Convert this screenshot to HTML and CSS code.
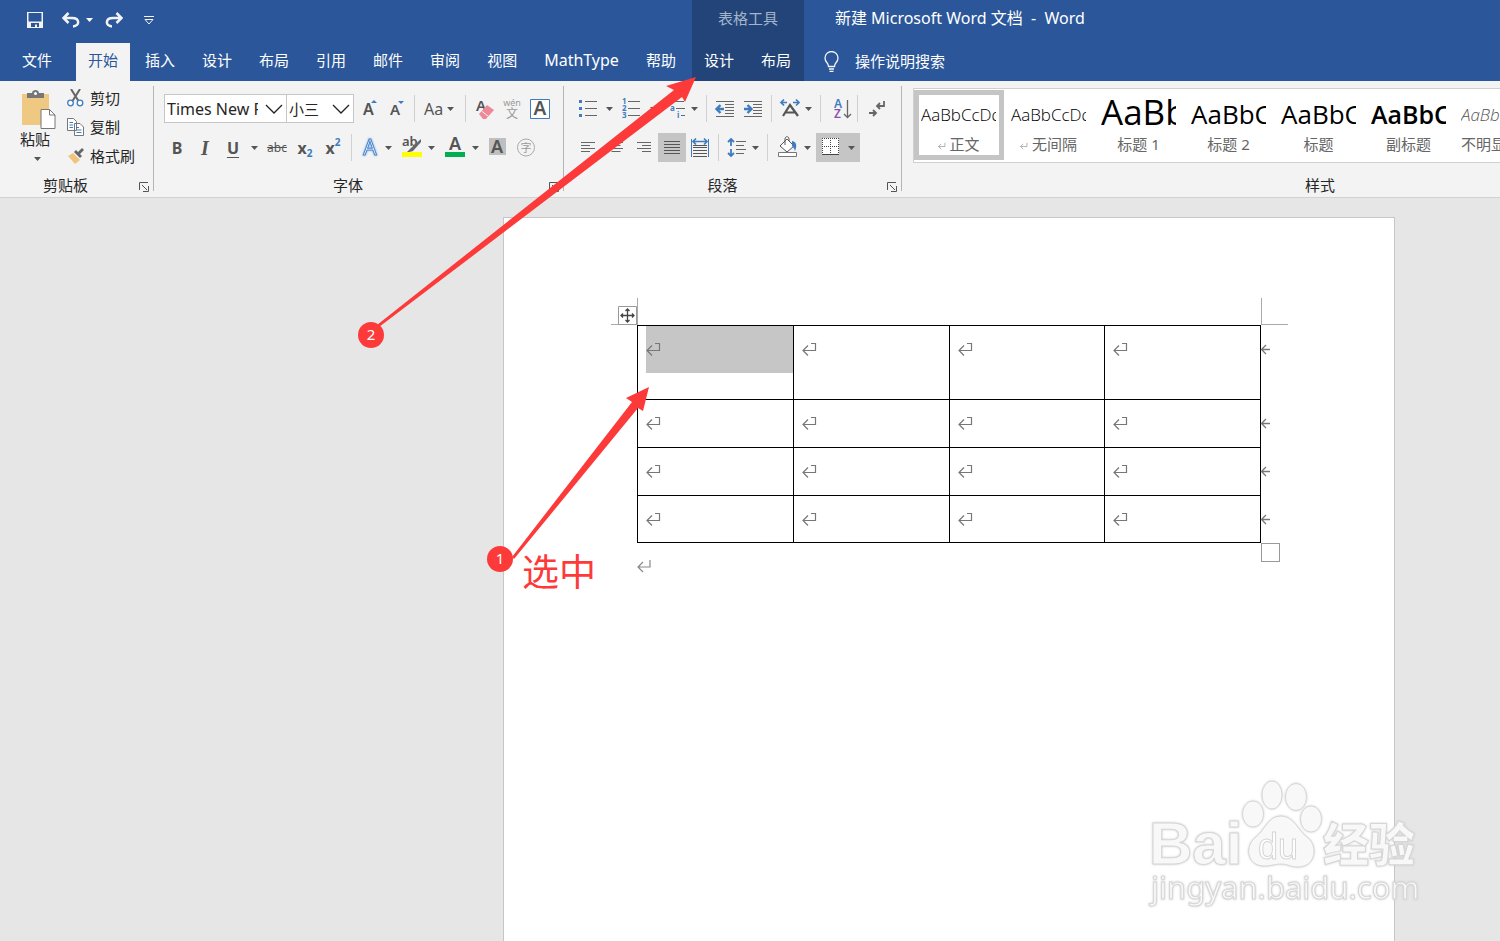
FILE: index.html
```html
<!DOCTYPE html>
<html lang="zh-CN">

<head>
    <meta charset="UTF-8">
    <meta name="viewport" content="width=device-width, initial-scale=1.0">
    <title>新建 Microsoft Word 文档 - Word</title>
    <link rel="stylesheet" href="styles.css">
</head>

<body>
    <!-- shared glyphs -->
    <svg class="sprite">
        <symbol id="caret" viewBox="0 0 7 4"><path d="M0 0h7L3.5 4z" fill="currentColor"/></symbol>
        <symbol id="chevron" viewBox="0 0 18 10"><path d="M1 1l8 8 8-8" fill="none" stroke="#222" stroke-width="1.3"/></symbol>
        <symbol id="launcher" viewBox="0 0 10 10"><path d="M.5 8V.5H9M3 3l5 5M9.500 4v5.500H4" fill="none" stroke="#555"/></symbol>
        <symbol id="cell-mark" viewBox="0 0 15 14"><path d="M9 1.500h4.500v7H1M6 3.500l-5 5 5 5" fill="none" stroke="#777" stroke-width="1.200"/></symbol>
        <symbol id="para-mark" viewBox="0 0 15 14"><path d="M13 1v7H1M6 3L1 8l5 5" fill="none" stroke="#888" stroke-width="1.200"/></symbol>
        <symbol id="row-mark" viewBox="0 0 10 11"><path d="M10 5.500H2M6 1L1.500 5.500 6 10" fill="none" stroke="#777" stroke-width="1.300"/></symbol>
    </svg>

    <header class="header">
        <div class="header-main">
            <div class="quick">
                <button class="quick-btn" aria-label="保存"><svg width="16" height="16" viewBox="0 0 16 16"><path d="M0 0h16v16H0z" fill="#f3f3f3"/><path d="M1.500 1h13v8.500h-13zM4 11h8v4h-2v-2.500H8V15H4z" fill="#2b579a"/></svg></button>
                <button class="quick-btn undo" aria-label="撤消"><svg width="18" height="16" viewBox="0 0 18 16"><path d="M2 6h8c8 0 8 8 1 8.500M6.500 1L1.500 6l5 5" fill="none" stroke="#f3f3f3" stroke-width="2.500"/></svg><svg class="caret" width="6" height="4"><use href="#caret"/></svg></button>
                <button class="quick-btn redo" aria-label="重复"><svg width="18" height="16" viewBox="0 0 18 16"><path d="M16 6H8C0 6 0 14 7 14.500M11.500 1l5 5-5 5" fill="none" stroke="#f3f3f3" stroke-width="2.500"/></svg></button>
                <button class="quick-btn" aria-label="自定义快速访问工具栏"><svg width="10" height="9" viewBox="0 0 10 9"><path d="M0 .5h10M1 3.500h8L5 8z" fill="none" stroke="#f3f3f3"/></svg></button>
            </div>
            <nav class="tabs">
                <button class="tab file">文件</button>
                <button class="tab active">开始</button>
                <button class="tab">插入</button>
                <button class="tab">设计</button>
                <button class="tab">布局</button>
                <button class="tab">引用</button>
                <button class="tab">邮件</button>
                <button class="tab">审阅</button>
                <button class="tab">视图</button>
                <button class="tab latin">MathType</button>
                <button class="tab">帮助</button>
            </nav>
        </div>
        <div class="header-context">
            <div class="context-title">表格工具</div>
            <nav class="tabs">
                <button class="tab">设计</button>
                <button class="tab">布局</button>
            </nav>
        </div>
        <div class="header-side">
            <div class="doc-title">新建 Microsoft Word 文档&nbsp; -&nbsp; Word</div>
            <label class="search">
                <svg width="15" height="21" viewBox="0 0 15 21"><path d="M4.500 15.500c0-4-3.500-4-3.500-8.500a6.500 6.500 0 0 1 13 0c0 4.500-3.500 4.500-3.500 8.500zM5 18h5M5.500 20.300h4" fill="none" stroke="#f3f3f3" stroke-width="1.300"/></svg>
                <input type="text" placeholder="操作说明搜索">
            </label>
        </div>
    </header>

    <section class="ribbon">
        <div class="group clipboard">
            <div class="clip-tools">
                <button class="paste">
                    <svg width="36" height="40" viewBox="0 0 36 40"><path d="M2 4h27v31H2z" fill="#efc982"/><path d="M7 8V3h5c0-4 7-4 7 0h5v5z" fill="#777"/><circle cx="15.500" cy="3.500" r="1.500" fill="#fff"/><path d="M21 19.500h8.500l5.500 5.500v13.500H21z" fill="#fff" stroke="#777"/><path d="M29.500 19.500V25H35" fill="none" stroke="#777"/></svg>
                    <span>粘贴</span>
                    <svg class="caret" width="7" height="4"><use href="#caret"/></svg>
                </button>
                <div class="clip-list">
                    <button><svg width="17" height="18" viewBox="0 0 17 18"><path d="M4 0l7.500 12M13 0L5.500 12" stroke="#666" stroke-width="2"/><circle cx="3.500" cy="14" r="2.800" fill="#fff" stroke="#3f7cbf" stroke-width="1.300"/><circle cx="13" cy="14" r="2.800" fill="#fff" stroke="#3f7cbf" stroke-width="1.300"/></svg>剪切</button>
                    <button><svg width="17" height="18" viewBox="0 0 17 18"><g fill="#fff" stroke="#777"><path d="M.5.500h6l3 3v9h-9zM7.500 5.500h5.500l3.500 3.500v8.500h-9z"/></g><path d="M2.500 4.500H6M2.500 7H6M2.500 9.500H6M9.500 9.500H12M9.500 12h5M9.500 14.500h5" stroke="#3f7cbf"/></svg>复制</button>
                    <button><svg width="17" height="18" viewBox="0 0 17 18"><path d="M1 9l5-3 7 7-5 4z" fill="#efc57e"/><path d="M7 5l2-2 6 6-2 2zM11 5l4-4 2 2-4 4z" fill="#666"/></svg>格式刷</button>
                </div>
            </div>
            <div class="group-name">剪贴板<svg class="launcher"><use href="#launcher"/></svg></div>
        </div>

        <div class="group font">
            <div class="row">
                <span class="combo name"><select aria-label="字体"><option>Times New Roman</option></select><svg width="18" height="10"><use href="#chevron"/></svg></span>
                <span class="combo size"><select aria-label="字号"><option>小三</option></select><svg width="18" height="10"><use href="#chevron"/></svg></span>
                <button class="tool" aria-label="增大字号"><svg width="28" height="28"><text x="9" y="20" class="letter" font-size="16">A</text><path d="M17 8l3-3 3 3z" fill="#3f7cbf"/></svg></button>
                <button class="tool" aria-label="减小字号"><svg width="28" height="28"><text x="8" y="20" class="letter" font-size="15">A</text><path d="M16 6h6l-3 3z" fill="#3f7cbf"/></svg></button>
                <i class="sep"></i>
                <button class="tool split wide">Aa<svg class="caret" width="7" height="4"><use href="#caret"/></svg></button>
                <i class="sep"></i>
                <button class="tool" aria-label="清除格式"><svg width="28" height="28"><text x="6" y="16" class="letter" font-size="15">A</text><path d="M9 19l8-9 7 5-8 9h-3z" fill="#ee8a98"/><path d="M11.500 16l7 5.500" stroke="#f3f3f3"/></svg></button>
                <button class="tool" aria-label="拼音指南"><svg width="28" height="28"><text x="14" y="11" class="faint" font-size="9">wén</text><text x="14" y="23" class="faint" font-size="12">文</text></svg></button>
                <button class="tool" aria-label="字符边框"><svg width="28" height="28"><path d="M4.500 4.500h19v19h-19z" fill="#fff" stroke="#3f7cbf"/><text x="14" y="20" class="letter mid" font-size="19">A</text></svg></button>
            </div>
            <div class="row">
                <button class="tool"><b>B</b></button>
                <button class="tool serif">I</button>
                <button class="tool split"><b class="under">U</b><svg class="caret" width="7" height="4"><use href="#caret"/></svg></button>
                <button class="tool strike">abc</button>
                <button class="tool script">x<sub>2</sub></button>
                <button class="tool script">x<sup>2</sup></button>
                <i class="sep"></i>
                <button class="tool split tight" aria-label="文本效果"><svg width="26" height="28"><text x="14" y="21" text-anchor="middle" class="glow" font-size="21">A</text></svg><svg class="caret" width="7" height="4"><use href="#caret"/></svg></button>
                <button class="tool split" aria-label="突出显示"><svg width="28" height="28"><text x="6" y="12" class="letter" font-size="13">ab</text><path d="M25 5L15 14l-5 5 7-2 8-9z" fill="#666"/><path d="M6 18h20v5H6z" fill="#ff0"/></svg><svg class="caret" width="7" height="4"><use href="#caret"/></svg></button>
                <button class="tool split" aria-label="字体颜色"><svg width="28" height="28"><text x="15" y="16" class="letter mid" font-size="18">A</text><path d="M5 18h20v5H5z" fill="#00b050"/></svg><svg class="caret" width="7" height="4"><use href="#caret"/></svg></button>
                <button class="tool" aria-label="字符底纹"><svg width="28" height="28"><path d="M5 4h17v17H5z" fill="#bfbfbf"/><text x="13" y="19" class="letter mid" font-size="18">A</text></svg></button>
                <button class="tool" aria-label="带圈字符"><svg width="28" height="28"><circle cx="14" cy="13.500" r="8.500" fill="none" stroke="#aaa"/><text x="14" y="18" class="faint" font-size="11">字</text></svg></button>
            </div>
            <div class="group-name">字体<svg class="launcher"><use href="#launcher"/></svg></div>
        </div>

        <div class="group para">
            <div class="row">
                <button class="tool split" aria-label="项目符号"><svg width="28" height="28"><path d="M11 6.500h12M11 13.500h12M11 20.500h12" stroke="#666"/><path d="M5 5h3v3H5zM5 12h3v3H5zM5 19h3v3H5z" fill="#3f7cbf"/></svg><svg class="caret" width="7" height="4"><use href="#caret"/></svg></button>
                <button class="tool split" aria-label="编号"><svg width="28" height="28"><path d="M10 6.500h12M10 13.500h12M10 20.500h12" stroke="#666"/><g class="num"><text x="4" y="9">1</text><text x="4" y="16">2</text><text x="4" y="23">3</text></g></svg><svg class="caret" width="7" height="4"><use href="#caret"/></svg></button>
                <button class="tool split tight" aria-label="多级列表"><svg width="26" height="28"><path d="M10 6.500h12M14 13.500h9M19 20.500h4" stroke="#666"/><g class="num"><text x="4" y="9">1</text><text x="8" y="16">a</text><text x="15" y="23">i</text></g></svg><svg class="caret" width="7" height="4"><use href="#caret"/></svg></button>
                <i class="sep"></i>
                <button class="tool" aria-label="减少缩进"><svg width="28" height="28"><path d="M5 6.500h18M14 9.500h9M14 12.500h9M14 15.500h9M14 18.500h9M5 21.500h18" stroke="#666"/><path d="M13 14H6M9.500 10L5.500 14l4 4" fill="none" stroke="#3f7cbf" stroke-width="2.400"/></svg></button>
                <button class="tool" aria-label="增加缩进"><svg width="28" height="28"><path d="M5 6.500h18M14 9.500h9M14 12.500h9M14 15.500h9M14 18.500h9M5 21.500h18" stroke="#666"/><path d="M5 14h7M8.500 10l4 4-4 4" fill="none" stroke="#3f7cbf" stroke-width="2.400"/></svg></button>
                <i class="sep"></i>
                <button class="tool split tight" aria-label="中文版式"><svg width="26" height="28"><path d="M7 21L14 10l8 11M10 17.500h9" fill="none" stroke="#555" stroke-width="2.200"/><path d="M5 7.500h6M8 4.500l-3 3 3 3M23 7.500h-6M20 4.500l3 3-3 3" fill="none" stroke="#3f7cbf" stroke-width="1.700"/></svg><svg class="caret" width="7" height="4"><use href="#caret"/></svg></button>
                <i class="sep"></i>
                <button class="tool" aria-label="排序"><svg width="28" height="28"><text x="9" y="13" font-size="12" font-weight="600" fill="#3f7cbf">A</text><text x="9" y="23" font-size="12" font-weight="600" fill="#8a4fb0">Z</text><path d="M22.500 5v17M19 19l3.500 3.500L26 19" fill="none" stroke="#666" stroke-width="1.300"/></svg></button>
                <i class="sep"></i>
                <button class="tool" aria-label="显示编辑标记"><svg width="28" height="28"><path d="M22 6v5h-7M18 8l-3 3 3 3M7 18h7M11 15l3 3-3 3" fill="none" stroke="#666" stroke-width="1.800"/></svg></button>
            </div>
            <div class="row">
                <button class="tool" aria-label="左对齐"><svg width="28" height="28"><path d="M7 8.500h14M7 11.500h9M7 14.500h14M7 17.500h9" stroke="#666"/></svg></button>
                <button class="tool" aria-label="居中"><svg width="28" height="28"><path d="M7 8.500h14M9.500 11.500h9M7 14.500h14M9.500 17.500h9" stroke="#666"/></svg></button>
                <button class="tool" aria-label="右对齐"><svg width="28" height="28"><path d="M7 8.500h14M12 11.500h9M7 14.500h14M12 17.500h9" stroke="#666"/></svg></button>
                <button class="tool on" aria-label="两端对齐"><svg width="28" height="28"><path d="M6 7.500h16M6 10.500h16M6 13.500h16M6 16.500h16M6 19.500h16" stroke="#555"/></svg></button>
                <button class="tool" aria-label="分散对齐"><svg width="28" height="28"><path d="M7 11.500h14M7 13.500h14M7 16.500h14M7 19.500h14M7 22.500h14" stroke="#555"/><path d="M5.500 5v18M22.500 5v18" stroke="#3f7cbf"/><path d="M7 7.500h14M10 4.500l-3 3 3 3M18 4.500l3 3-3 3" fill="none" stroke="#3f7cbf" stroke-width="1.700"/></svg></button>
                <i class="sep"></i>
                <button class="tool split tight" aria-label="行距"><svg width="26" height="28"><path d="M13 7.500h10M13 11.500h8M13 15.500h10M13 19.500h8" stroke="#666"/><path d="M8 5v7M5 8l3-3 3 3M8 15v7M5 19l3 3 3-3" fill="none" stroke="#3f7cbf" stroke-width="1.800"/></svg><svg class="caret" width="7" height="4"><use href="#caret"/></svg></button>
                <i class="sep"></i>
                <button class="tool split" aria-label="底纹"><svg width="28" height="28"><path d="M15 5l7 7-7 6-7-6zM13 11V5c0-3 4-3 4 0v2" fill="#fff" stroke="#555"/><path d="M20 7c5 1 5 5 3 10-1-3-2-4-3-5z" fill="#3f7cbf"/><path d="M6.500 18.500h18v4h-18z" fill="#fff" stroke="#777"/></svg><svg class="caret" width="7" height="4"><use href="#caret"/></svg></button>
                <button class="tool split on" aria-label="边框"><svg width="28" height="28"><path d="M6 4h17v17H6z" fill="#fff"/><path d="M6.500 4v16M14.500 4v16M22.500 4v16M6 4.500h17M6 12.500h17" stroke="#444" stroke-dasharray="1 1"/><path d="M6 20.500h17" stroke="#444"/></svg><svg class="caret" width="7" height="4"><use href="#caret"/></svg></button>
            </div>
            <div class="group-name">段落<svg class="launcher"><use href="#launcher"/></svg></div>
        </div>

        <div class="group styles">
            <div class="gallery">
                <button class="style selected"><span class="sample">AaBbCcDd</span><span><svg width="8" height="8"><use href="#para-mark"/></svg> 正文</span></button>
                <button class="style"><span class="sample">AaBbCcDd</span><span><svg width="8" height="8"><use href="#para-mark"/></svg> 无间隔</span></button>
                <button class="style"><span class="sample h1">AaBb</span><span>标题 1</span></button>
                <button class="style"><span class="sample h2">AaBbC</span><span>标题 2</span></button>
                <button class="style"><span class="sample h2">AaBbC</span><span>标题</span></button>
                <button class="style"><span class="sample sub">AaBbC</span><span>副标题</span></button>
                <button class="style"><span class="sample subtle">AaBbCcDd</span><span>不明显强调</span></button>
            </div>
            <div class="group-name">样式</div>
        </div>
    </section>

    <main class="workspace">
        <article class="page">
            <div class="table-wrap">
                <svg class="crop left" width="27" height="27"><path d="M26.500 0v27M0 26.500h27" stroke="#aaa"/></svg>
                <svg class="crop right" width="27" height="27"><path d="M.5 0v27M0 26.500h27" stroke="#aaa"/></svg>
                <svg class="handle" width="19" height="19"><path d="M.5.500h18v18H.5z" fill="#fff" stroke="#999"/><path d="M9.500 3v13M3 9.500h13M7.500 5l2-2 2 2M7.500 14l2 2 2-2M5 7.500l-2 2 2 2M14 7.500l2 2-2 2" fill="none" stroke="#444" stroke-width="1.300"/></svg>
                <table class="grid">
                    <tr class="tall">
                        <td><div class="cell picked"><svg><use href="#cell-mark"/></svg></div></td>
                        <td><div class="cell"><svg><use href="#cell-mark"/></svg></div></td>
                        <td><div class="cell"><svg><use href="#cell-mark"/></svg></div></td>
                        <td><div class="cell"><svg><use href="#cell-mark"/></svg></div><svg class="row-end"><use href="#row-mark"/></svg></td>
                    </tr>
                    <tr>
                        <td><div class="cell"><svg><use href="#cell-mark"/></svg></div></td>
                        <td><div class="cell"><svg><use href="#cell-mark"/></svg></div></td>
                        <td><div class="cell"><svg><use href="#cell-mark"/></svg></div></td>
                        <td><div class="cell"><svg><use href="#cell-mark"/></svg></div><svg class="row-end"><use href="#row-mark"/></svg></td>
                    </tr>
                    <tr>
                        <td><div class="cell"><svg><use href="#cell-mark"/></svg></div></td>
                        <td><div class="cell"><svg><use href="#cell-mark"/></svg></div></td>
                        <td><div class="cell"><svg><use href="#cell-mark"/></svg></div></td>
                        <td><div class="cell"><svg><use href="#cell-mark"/></svg></div><svg class="row-end"><use href="#row-mark"/></svg></td>
                    </tr>
                    <tr>
                        <td><div class="cell"><svg><use href="#cell-mark"/></svg></div></td>
                        <td><div class="cell"><svg><use href="#cell-mark"/></svg></div></td>
                        <td><div class="cell"><svg><use href="#cell-mark"/></svg></div></td>
                        <td><div class="cell"><svg><use href="#cell-mark"/></svg></div><svg class="row-end"><use href="#row-mark"/></svg></td>
                    </tr>
                </table>
                <i class="resize"></i>
            </div>
            <svg class="last-mark" width="15" height="14"><use href="#para-mark"/></svg>
        </article>
    </main>

    <!-- step annotations -->
    <svg class="arrows" width="720" height="600">
        <path d="M377 325L674 90l-8-4 30-9-11 25-3-5L379 327z" fill="#fd3a3a"/>
        <path d="M512 557L632 402l-6-4 23-11-6 24-5-3L514 559z" fill="#fd3a3a"/>
    </svg>
    <span class="step two">2</span>
    <span class="step one">1</span>
    <span class="note">选中</span>

    <svg class="watermark" width="290" height="140" viewBox="0 0 290 140">
        <g class="mark">
            <ellipse cx="123" cy="44" rx="10.500" ry="13"/>
            <ellipse cx="142" cy="25" rx="10" ry="14"/>
            <ellipse cx="166" cy="27" rx="10.500" ry="13.500"/>
            <ellipse cx="181" cy="49" rx="10.500" ry="13"/>
            <path d="M151 46c-13 0-16 14-25 21-12 9-9 29 8 29 8 0 10-2 17-2s9 3 17 3c18 0 20-21 10-29-10-7-14-22-27-22z"/>
            <text x="19" y="94" font-size="60" class="bai">Bai</text>
            <text x="128" y="89" font-size="36">du</text>
            <text x="193" y="91" font-size="46" class="cn">经验</text>
            <text x="21" y="129" font-size="31" class="url">jingyan.baidu.com</text>
        </g>
    </svg>
</body>

</html>
```

FILE: styles.css
```css
* {
    box-sizing: border-box;
}

body {
    margin: 0;
    min-height: 100vh;
    display: flex;
    flex-direction: column;
    position: relative;
    overflow: hidden;
    background-color: #e6e6e6;
    font-family: "Noto Sans", "Noto Sans CJK SC", sans-serif;
    font-size: 15px;
    color: #262626;
}

button,
input,
select {
    font: inherit;
    color: inherit;
    background: none;
    border: none;
    padding: 0;
    margin: 0;
}

svg {
    flex: none;
}

.sprite {
    position: absolute;
    width: 0;
    height: 0;
}

.caret {
    width: 7px;
    height: 4px;
}

/* title bar and tabs */
.header {
    display: flex;
    height: 81px;
    background-color: #2b579a;
    color: white;
    white-space: nowrap;
}

.header-main {
    padding-right: 4px;
}

.quick {
    display: flex;
    align-items: center;
    height: 43px;
    padding: 0 0 3px 27px;
}

.quick-btn {
    display: flex;
    align-items: center;
}

.undo {
    gap: 6px;
    margin: 0 12px 0 19px;
}

.redo {
    margin-right: 21px;
}

.tabs {
    display: flex;
    gap: 3px;
}

.tab {
    height: 38px;
    padding: 0 12px 5px;
}

.tab.file {
    padding: 0 21px 5px 22px;
}

.tab.latin {
    font-size: 16px;
}

.tab.active {
    background-color: #f3f3f3;
    color: #2b579a;
}

.header-context {
    min-width: 112px;
    background-color: #224478;
}

.context-title {
    height: 43px;
    line-height: 36px;
    text-align: center;
    color: #a4b4cb;
}

.header-side {
    flex: 1;
    padding-left: 20px;
}

.doc-title {
    height: 43px;
    line-height: 36px;
    padding-left: 11px;
    font-size: 16px;
}

.search {
    display: flex;
    align-items: center;
    gap: 16px;
    height: 36px;
}

.search input {
    width: 200px;
    outline: none;
}

.search input::placeholder {
    color: white;
    opacity: 1;
}

/* ribbon */
.ribbon {
    display: flex;
    height: 117px;
    padding: 5px 0 6px;
    overflow: hidden;
    background-color: #f3f3f3;
    border-bottom: 1px solid #d2d2d2;
    white-space: nowrap;
}

.group {
    flex: none;
    display: flex;
    flex-direction: column;
    position: relative;
    border-right: 1px solid #b5b5b5;
}

.group-name {
    margin-top: auto;
    line-height: 12px;
    text-align: center;
}

.launcher {
    position: absolute;
    right: 4px;
    bottom: -1px;
    width: 10px;
    height: 10px;
}

.clipboard {
    width: 154px;
}

.clipboard .group-name {
    padding-right: 22px;
}

.clip-tools {
    display: flex;
    padding-left: 20px;
}

.paste {
    display: flex;
    flex-direction: column;
    align-items: flex-start;
    align-self: flex-start;
    line-height: 18px;
    margin-top: 4px;
    width: 36px;
}

.paste .caret {
    margin: 9px 0 0 14px;
    color: #555;
}

.clip-list {
    margin-left: 11px;
}

.clip-list button {
    display: flex;
    align-items: center;
    gap: 6px;
    height: 29px;
    padding-bottom: 6px;
}

.font {
    width: 410px;
    padding-left: 9px;
}

.font .group-name {
    padding-right: 30px;
}

.para {
    width: 338px;
    padding-left: 10px;
}

.para .group-name {
    padding-right: 30px;
}

.row {
    display: flex;
    align-items: center;
    height: 29px;
    margin-top: 10px;
}

.row:first-child {
    margin-top: 8px;
}

.combo {
    position: relative;
    height: 29px;
    background-color: white;
    border: 1px solid #c6c6c6;
}

.combo select {
    appearance: none;
    width: 100%;
    height: 27px;
    padding: 0 28px 0 2px;
    outline: none;
}

.combo svg {
    position: absolute;
    right: 3px;
    top: 9px;
}

.combo.name {
    width: 123px;
    margin-left: 1px;
    font-size: 16px;
}

.combo.size {
    width: 68px;
    margin-left: -1px;
}

.tool {
    flex: none;
    display: flex;
    align-items: center;
    justify-content: center;
    width: 28px;
    height: 29px;
    font-size: 16px;
    line-height: 24px;
    color: #555;
}

.tool.on {
    background-color: #c5c5c5;
}

.split {
    width: 44px;
    justify-content: flex-start;
}

.split .caret {
    margin-left: 4px;
}

.tight {
    width: 40px;
}

.tight .caret {
    margin-left: 3px;
}

.wide {
    width: 42px;
    padding-left: 5px;
}

.under {
    width: 28px;
    text-align: center;
    text-decoration: underline;
    text-underline-offset: 3px;
}

.serif {
    font-family: "Liberation Serif", serif;
    font-size: 20px;
    font-style: italic;
    font-weight: 700;
}

.strike {
    font-size: 12px;
    text-decoration: line-through;
}

.script {
    font-weight: 700;
}

.script sub,
.script sup {
    align-self: flex-end;
    padding: 3px 0;
    font-size: 10px;
    line-height: 12px;
    color: #3f7cbf;
}

.script sup {
    align-self: flex-start;
}

.letter {
    fill: #555;
    font-weight: 600;
}

.mid,
.faint {
    text-anchor: middle;
}

.faint {
    fill: #999;
}

.glow {
    fill: white;
    stroke: #4a86cc;
    stroke-width: 1px;
    filter: drop-shadow(0 0 1px #7fb0e6);
}

.num {
    fill: #3f7cbf;
    font-size: 8px;
    font-weight: 700;
}

.sep {
    width: 1px;
    height: 27px;
    margin: 0 4px;
    background-color: #d0d0d0;
}

/* style gallery */
.styles {
    min-width: 834px;
    padding-left: 11px;
}

.styles .group-name {
    padding-right: 8px;
}

.gallery {
    display: flex;
    height: 75px;
    margin-top: 2px;
    padding: 1px 0;
    background-color: white;
    border: 1px solid #d0d0d0;
}

.style {
    display: flex;
    flex-direction: column;
    align-items: center;
    width: 90px;
    height: 70px;
    padding-right: 1px;
    border: 5px solid transparent;
    overflow: hidden;
    line-height: 20px;
    color: #666;
}

.style.selected {
    border-color: #c5c5c5;
}

.sample {
    width: 75px;
    height: 39px;
    line-height: 39px;
    overflow: hidden;
    text-align: left;
    font-family: "Open Sans", "Noto Sans", sans-serif;
    font-size: 17px;
    font-weight: 300;
    color: black;
}

.sample.h1 {
    font-size: 35px;
    font-weight: 500;
    line-height: 34px;
}

.sample.h2 {
    font-size: 26px;
    font-weight: 400;
}

.sample.sub {
    font-size: 25px;
    font-weight: 600;
}

.sample.subtle {
    font-style: italic;
    color: #555;
}

/* document */
.workspace {
    flex: 1;
    display: flex;
    padding: 19px 7% 0 0;
}

.page {
    width: 892px;
    margin-left: auto;
    padding: 107px 133px 0;
    background-color: white;
    border: 1px solid #c6c6c6;
    border-bottom: none;
}

.table-wrap {
    position: relative;
}

.grid {
    width: 100%;
    table-layout: fixed;
    border-collapse: collapse;
}

.grid td {
    position: relative;
    height: 48px;
    padding: 0 0 0 8px;
    border: 1px solid black;
    vertical-align: top;
}

.grid .tall td {
    height: 74px;
}

.grid tr:last-child td {
    height: 47px;
}

.cell {
    height: 46px;
    padding-top: 16px;
}

.cell svg {
    display: block;
    width: 15px;
    height: 14px;
}

.picked {
    height: 47px;
    background-color: #c6c6c6;
}

.row-end {
    position: absolute;
    left: 100%;
    top: 18px;
    width: 10px;
    height: 11px;
}

.crop {
    position: absolute;
    top: -27px;
}

.crop.left {
    left: -26px;
}

.crop.right {
    left: 100%;
}

.handle {
    position: absolute;
    left: -19px;
    top: -19px;
}

.resize {
    position: absolute;
    left: 100%;
    top: 100%;
    width: 19px;
    height: 19px;
    border: 1px solid #999;
}

.last-mark {
    display: block;
    margin-top: 16px;
}

/* annotations */
.arrows {
    position: absolute;
    left: 0;
    top: 0;
}

.step {
    position: absolute;
    width: 26px;
    height: 26px;
    border-radius: 50%;
    background-color: #fd3a3a;
    color: white;
    line-height: 24px;
    text-align: center;
}

.step.two {
    left: 358px;
    top: 322px;
}

.step.one {
    left: 487px;
    top: 546px;
}

.note {
    position: absolute;
    left: 522px;
    top: 547px;
    font-size: 37px;
    line-height: 50px;
    color: #fd3a3a;
}

.watermark {
    position: absolute;
    right: 80px;
    bottom: 31px;
}

.mark {
    fill: rgba(255, 255, 255, 0.85);
    stroke: #d6d6d6;
    stroke-width: 1px;
    font-family: "Liberation Sans", sans-serif;
    filter: drop-shadow(0 0 1px #ccc);
}

.bai {
    font-weight: 700;
}

.cn {
    font-family: "Noto Sans CJK SC", sans-serif;
    font-weight: 900;
}

.url {
    font-family: "Noto Sans", sans-serif;
}
```
